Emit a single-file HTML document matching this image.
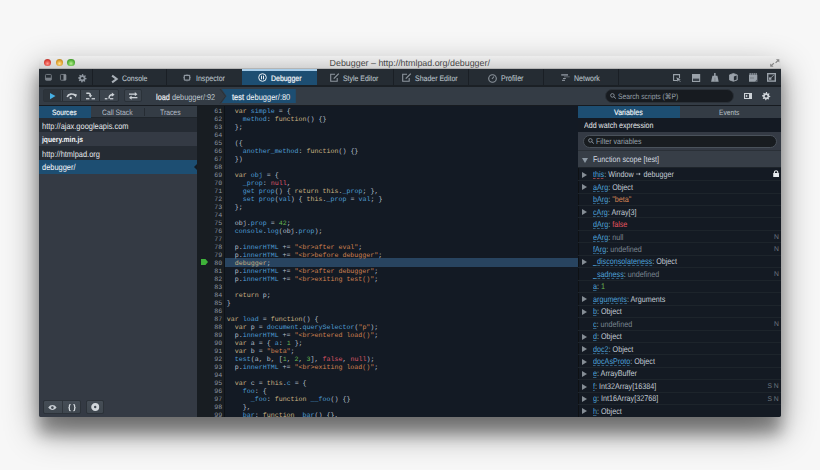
<!DOCTYPE html>
<html><head><meta charset="utf-8"><style>
*{box-sizing:border-box;margin:0;padding:0}
html,body{text-rendering:geometricPrecision;width:820px;height:470px;overflow:hidden;background:#f7f7f7;font-family:"Liberation Sans",sans-serif}
.a{position:absolute}
#win{left:38.5px;top:56px;width:742.5px;height:361.2px;background:linear-gradient(#e6e6e6 0,#e6e6e6 13px,#343a44 13px);border-radius:4px 4px 2px 2px;box-shadow:0 14px 34px rgba(0,0,0,.44),0 17px 15px rgba(0,0,0,.3);overflow:hidden}
#title{left:0;top:0;width:100%;height:13px;border-radius:4px 4px 0 0;background:linear-gradient(#ededed,#d3d3d3);border-bottom:1px solid #b4b4b4}
.tl{top:3px;width:7.4px;height:7.4px;border-radius:50%}
#ttxt{left:0;width:100%;top:1.1px;text-align:center;font-size:8.9px;line-height:12px;color:#474747}
#tb{left:0;top:13px;width:100%;height:16.2px;background:#252c33}
#tbline{left:0;top:29.2px;width:100%;height:1.8px;background:#1b2025}
.tab{top:13px;height:16.2px;color:#a9b3bd;font-size:7.05px;line-height:16.5px;white-space:nowrap}
.sep{top:13px;width:1px;height:16.2px;background:#1a1f25}
.ico{position:absolute;overflow:visible}
#dt{left:0;top:31px;width:100%;height:17.6px;background:#343c45}
#dtline{left:0;top:48.6px;width:100%;height:1.4px;background:#171b20}
.btn{top:32.9px;height:13.6px;background:#3c444d;border:1px solid #2b3239;border-radius:2px}
.pane{top:50px;height:311.2px;overflow:hidden}
.code{font-family:"Liberation Mono",monospace;font-size:6.65px;line-height:8px;padding-top:0.7px;white-space:pre;color:#b3bfca}
.ln{color:#8a94a0}
.k{color:#c9b282}.v{color:#4f9cd3}.s{color:#d08150}.n{color:#68b551}.r{color:#de5566}
.row{left:0;width:100%;height:12.45px;border-bottom:1px solid #1d242b;font-size:7.2px;line-height:12.45px;color:#c2cbd4;white-space:nowrap}
.vn{color:#4ea2db;text-decoration:underline dashed rgba(78,162,219,.55);text-decoration-thickness:1px;text-underline-offset:1.3px}
.tri{position:absolute;left:4px;top:4px;width:0;height:0;border-left:5.2px solid #858d95;border-top:3px solid transparent;border-bottom:3px solid transparent}
.st{color:#d88555}.fa{color:#e2545f}.nu{color:#7a8590}.gr{color:#68b551}
</style></head><body>
<div id="win" class="a">
<div id="title" class="a">
<div class="a tl" style="left:5.2px;background:radial-gradient(circle at 50% 65%,#ff9c92,#e2463d 50%,#a52d27 95%)"></div>
<div class="a tl" style="left:17.2px;background:radial-gradient(circle at 50% 65%,#ffe28f,#e0a232 50%,#a5771a 95%)"></div>
<div class="a tl" style="left:28.9px;background:radial-gradient(circle at 50% 65%,#b9ef95,#5cb93f 50%,#3a8526 95%)"></div>
<div id="ttxt" class="a">Debugger – http://htmlpad.org/debugger/</div>
<svg class="ico" style="left:731.5px;top:2.8px" width="9.5" height="8" viewBox="0 0 9.5 8"><path d="M9.3 0.2V3.6L5.9 0.2Z" fill="#858585"/><path d="M8 1.5L5.6 3.9" stroke="#858585" stroke-width="1.1"/><path d="M0.2 7.8V4.4L3.6 7.8Z" fill="#858585"/><path d="M1.5 6.5L3.9 4.1" stroke="#858585" stroke-width="1.1"/></svg>
</div>
<div id="tb" class="a"></div><div id="tbline" class="a"></div>
<svg class="ico" style="left:6.600000000000001px;top:18.200000000000003px" width="6.8" height="6.7" viewBox="0 0 6.8 6.7"><rect x="0.45" y="0.45" width="5.9" height="5.8" rx="0.9" fill="none" stroke="#7a8189" stroke-width="0.9"/><rect x="0.45" y="3.7" width="5.9" height="2.55" fill="#7a8189"/></svg><svg class="ico" style="left:21.4px;top:18.200000000000003px" width="6.4" height="6.7" viewBox="0 0 6.4 6.7"><rect x="0.45" y="0.45" width="5.5" height="5.8" rx="0.8" fill="none" stroke="#7a8189" stroke-width="0.9"/><rect x="3.5" y="0.45" width="2.45" height="5.8" fill="#8a9098"/></svg><svg class="ico" style="left:39.099999999999994px;top:17.5px" width="8.6" height="8.6" viewBox="0 0 8.6 8.6"><polygon points="8.60,4.30 8.52,5.14 7.16,5.48 6.87,6.02 7.34,7.34 6.69,7.88 5.48,7.16 4.90,7.34 4.30,8.60 3.46,8.52 3.12,7.16 2.58,6.87 1.26,7.34 0.72,6.69 1.44,5.48 1.26,4.90 0.00,4.30 0.08,3.46 1.44,3.12 1.73,2.58 1.26,1.26 1.91,0.72 3.12,1.44 3.70,1.26 4.30,0.00 5.14,0.08 5.48,1.44 6.02,1.73 7.34,1.26 7.88,1.91 7.16,3.12 7.34,3.70" fill="#8d959e"/><circle cx="4.3" cy="4.3" r="1.29" fill="#252c33"/></svg><div class="a sep" style="left:53.099999999999994px"></div><div class="a sep" style="left:127.9px"></div><div class="a sep" style="left:354.0px"></div><div class="a sep" style="left:429.5px"></div><div class="a sep" style="left:504.9px"></div><div class="a sep" style="left:579.5px"></div><div class="a" style="left:203.5px;top:13px;width:75.2px;height:16.2px;background:#1d4e72;border-top:2px solid #a9cde8"></div><div class="a" style="left:83.9px;top:17.60px;font-size:7.96px;line-height:10px;color:#bac2c9;white-space:nowrap;transform:scaleX(0.8696);transform-origin:0 50%;-webkit-text-stroke:0.1px #bac2c9">Console</div><div class="a" style="left:157.2px;top:17.60px;font-size:8.11px;line-height:10px;color:#bac2c9;white-space:nowrap;transform:scaleX(0.8696);transform-origin:0 50%;-webkit-text-stroke:0.1px #bac2c9">Inspector</div><div class="a" style="left:232.0px;top:17.60px;font-size:7.99px;line-height:10px;color:#f2f5f8;white-space:nowrap;transform:scaleX(0.8696);transform-origin:0 50%;-webkit-text-stroke:0.2px #f2f5f8">Debugger</div><div class="a" style="left:304.8px;top:17.60px;font-size:7.96px;line-height:10px;color:#bac2c9;white-space:nowrap;transform:scaleX(0.8696);transform-origin:0 50%;-webkit-text-stroke:0.1px #bac2c9">Style Editor</div><div class="a" style="left:376.5px;top:17.60px;font-size:8.02px;line-height:10px;color:#bac2c9;white-space:nowrap;transform:scaleX(0.8696);transform-origin:0 50%;-webkit-text-stroke:0.1px #bac2c9">Shader Editor</div><div class="a" style="left:462.1px;top:17.60px;font-size:8.16px;line-height:10px;color:#bac2c9;white-space:nowrap;transform:scaleX(0.8696);transform-origin:0 50%;-webkit-text-stroke:0.1px #bac2c9">Profiler</div><div class="a" style="left:535.3px;top:17.60px;font-size:8.12px;line-height:10px;color:#bac2c9;white-space:nowrap;transform:scaleX(0.8696);transform-origin:0 50%;-webkit-text-stroke:0.1px #bac2c9">Network</div><svg class="ico" style="left:72.0px;top:18.5px" width="7" height="8" viewBox="0 0 7 8"><path d="M1.1 0.7L5.6 4L1.1 7.3" fill="none" stroke="#a9b0b7" stroke-width="2.1"/></svg><svg class="ico" style="left:144.5px;top:18.200000000000003px" width="8" height="7.4" viewBox="0 0 8 7.4"><rect x="1.3" y="1.3" width="5.4" height="4.8" rx="0.5" fill="none" stroke="#8d959e" stroke-width="1.25"/><rect x="3.6" y="0" width="0.8" height="0.7" fill="#8d959e"/><rect x="3.6" y="6.7" width="0.8" height="0.7" fill="#8d959e"/><rect x="0" y="3.3" width="0.7" height="0.8" fill="#8d959e"/><rect x="7.3" y="3.3" width="0.7" height="0.8" fill="#8d959e"/></svg><svg class="ico" style="left:219.10000000000002px;top:17px" width="9" height="9" viewBox="0 0 9 9"><circle cx="4.5" cy="4.5" r="3.8" fill="none" stroke="#e8eef3" stroke-width="1"/><rect x="3" y="2.7" width="1" height="3.6" fill="#e8eef3"/><rect x="5" y="2.7" width="1" height="3.6" fill="#e8eef3"/></svg><svg class="ico" style="left:291.6px;top:16.900000000000006px" width="10" height="9" viewBox="0 0 10 9"><path d="M5 1.2H0.7V8.3H7.2V5" fill="none" stroke="#8d959e" stroke-width="1.1"/><path d="M3.8 5.6L8.8 0.6" stroke="#8d959e" stroke-width="1.3"/></svg><svg class="ico" style="left:363.5px;top:16.900000000000006px" width="10" height="9" viewBox="0 0 10 9"><path d="M5 1.2H0.7V8.3H7.2V5" fill="none" stroke="#8d959e" stroke-width="1.1"/><path d="M3.8 5.6L8.8 0.6" stroke="#8d959e" stroke-width="1.3"/></svg><svg class="ico" style="left:449.3px;top:17.5px" width="9" height="9" viewBox="0 0 9 9"><circle cx="4.5" cy="4.5" r="3.8" fill="none" stroke="#8d959e" stroke-width="1.1"/><path d="M4 5L6 2.5" stroke="#8d959e" stroke-width="1.1"/></svg><svg class="ico" style="left:522.5px;top:18px" width="9" height="7.2" viewBox="0 0 9 7.2"><rect x="0.2" y="0.2" width="6.8" height="1.4" fill="#8d959e"/><rect x="3" y="2.4" width="5.7" height="0.9" fill="#6a7179"/><rect x="2" y="4" width="2.8" height="1" fill="#8d959e"/><rect x="1" y="5.8" width="3" height="1.1" fill="#8d959e"/></svg><svg class="ico" style="left:634.5px;top:18px" width="8" height="8" viewBox="0 0 8 8"><path d="M4.5 6.5H0.6V0.6H6.5V4" fill="none" stroke="#9aa2aa" stroke-width="1.1"/><path d="M3.3 3.3L7.8 5.2L6 5.9L7.8 7.7L7.2 8L5.6 6.3L4.7 7.8Z" fill="#9aa2aa"/></svg><svg class="ico" style="left:653.1px;top:18px" width="8.2" height="8" viewBox="0 0 8.2 8"><rect x="0" y="0" width="8.2" height="8" fill="#9aa2aa"/><rect x="1" y="4.6" width="6.2" height="2.4" fill="#3a424a"/></svg><svg class="ico" style="left:672.5px;top:17.200000000000003px" width="7.8" height="8.8" viewBox="0 0 7.8 8.8"><rect x="3.1" y="0" width="1.5" height="3" fill="#9aa2aa"/><path d="M1.4 2.8H6.4L7.7 8.7H0.1Z" fill="#9aa2aa"/><rect x="3.6" y="4.5" width="0.7" height="4.2" fill="#6d747b"/></svg><svg class="ico" style="left:690.7px;top:17.200000000000003px" width="8.8" height="8.8" viewBox="0 0 8.8 8.8"><path d="M4.4 0.5L8.3 1.9V6.9L4.4 8.3L0.5 6.9V1.9Z" fill="#9aa2aa" stroke="#9aa2aa" stroke-width="0.8" stroke-linejoin="round"/><path d="M4.9 3.5L7.6 2.6V6.4L4.9 7.4Z" fill="#252c33"/></svg><svg class="ico" style="left:710.4px;top:17.200000000000003px" width="8.3" height="8.8" viewBox="0 0 8.3 8.8"><path d="M0 1.8V8.8H8.3V1.8Z" fill="#9aa2aa"/><rect x="0.6" y="0" width="1.1" height="2" fill="#9aa2aa"/><rect x="2.6" y="0" width="1.1" height="2" fill="#9aa2aa"/><rect x="4.6" y="0" width="1.1" height="2" fill="#9aa2aa"/><rect x="6.6" y="0" width="1.1" height="2" fill="#9aa2aa"/><rect x="1" y="4.6" width="4" height="0.8" fill="#6d747b"/><path d="M8.3 6.2L5.7 8.8H8.3Z" fill="#4d555d"/></svg><svg class="ico" style="left:728.7px;top:17.200000000000003px" width="9" height="8.8" viewBox="0 0 9 8.8"><rect x="0.7" y="0.7" width="7.6" height="7.4" fill="#2a3037" stroke="#9aa2aa" stroke-width="1.4"/><rect x="2" y="4.4" width="2.4" height="2.4" fill="#9aa2aa"/><path d="M4 4.8L6.8 2" stroke="#9aa2aa" stroke-width="0.9"/></svg><div id="dt" class="a"></div><div id="dtline" class="a"></div>
<div class="a btn" style="left:4.399999999999999px;width:76.19999999999999px"></div><div class="a" style="left:5.399999999999999px;top:33.9px;width:17.6px;height:11.6px;background:#2d343b"></div><div class="a" style="left:23.0px;top:33.9px;width:1px;height:11.6px;background:#262c33"></div><div class="a" style="left:41.8px;top:33.9px;width:1px;height:11.6px;background:#262c33"></div><div class="a" style="left:60.8px;top:33.9px;width:1px;height:11.6px;background:#262c33"></div><div class="a btn" style="left:85.4px;width:18.0px"></div><svg class="ico" style="left:11.399999999999999px;top:37px" width="5.5" height="6.2" viewBox="0 0 5.5 6.2"><path d="M0 0L5.5 3.1L0 6.2Z" fill="#46afe3"/></svg><svg class="ico" style="left:23.5px;top:32px" width="60" height="16" viewBox="62 88 60 16"><path d="M67.2 97C68.3 93.6 73 93.2 75 95.6" fill="none" stroke="#cdd2d7" stroke-width="1.6"/><path d="M73.3 93.4L77 94.6L75.7 97.6Z" fill="#cdd2d7"/><circle cx="70.7" cy="98" r="1.15" fill="#cdd2d7"/><path d="M86.3 93.2H88.8C90.2 93.2 90.4 94.6 90.4 95.8" fill="none" stroke="#cdd2d7" stroke-width="1.5"/><path d="M88.6 95.3H92.3L90.45 97.6Z" fill="#cdd2d7"/><rect x="86" y="98.1" width="3.4" height="1.3" fill="#cdd2d7"/><rect x="91.6" y="98.1" width="3.4" height="1.3" fill="#cdd2d7"/><rect x="104.8" y="98.1" width="2.6" height="1.3" fill="#cdd2d7"/><rect x="110" y="98.1" width="3.3" height="1.3" fill="#cdd2d7"/><path d="M109.2 98.6C108.8 96 110 94.7 112.2 94.7" fill="none" stroke="#cdd2d7" stroke-width="1.5"/><path d="M111.8 92.6L114.6 94.7L111.8 96.8Z" fill="#cdd2d7"/></svg><svg class="ico" style="left:90.19999999999999px;top:36.2px" width="8.4" height="7.8" viewBox="0 0 8.4 7.8"><rect x="0" y="1.5" width="6.5" height="1.3" fill="#cdd2d7"/><path d="M5.8 0L8.4 2.15L5.8 4.3Z" fill="#cdd2d7"/><rect x="1.9" y="5" width="6.5" height="1.3" fill="#cdd2d7"/><path d="M2.6 3.5L0 5.65L2.6 7.8Z" fill="#cdd2d7"/></svg><div class="a" style="left:183.0px;top:32.8px;width:74.30000000000001px;height:14.5px;background:#1d4e72;clip-path:polygon(0 0,100% 0,100% 100%,0 100%,5px 50%)"></div><svg class="ico" style="left:180.5px;top:32.8px" width="8" height="14.5" viewBox="0 0 8 14.5"><path d="M1 0L6.5 7.25L1 14.5" fill="none" stroke="#2a3138" stroke-width="1"/></svg><div class="a" style="left:117.30000000000001px;top:35.50px;font-size:8.45px;line-height:10px;color:#bcc4cc;white-space:nowrap;transform:scaleX(0.8696);transform-origin:0 50%;"><span style="-webkit-text-stroke:0.2px #e6eaee;color:#e6eaee">load</span> debugger/:92</div><div class="a" style="left:193.7px;top:35.50px;font-size:8.62px;line-height:10px;color:#f2f5f8;white-space:nowrap;transform:scaleX(0.8696);transform-origin:0 50%;"><span style="-webkit-text-stroke:0.2px #f2f5f8">test</span> debugger/:80</div><div class="a" style="left:566.3px;top:33.2px;width:129.60000000000002px;height:13.4px;border-radius:7px;background:#171b20;border:1px solid #2b3138"></div><svg class="ico" style="left:571.3px;top:37.2px" width="6.2" height="5.8" viewBox="0 0 6.2 5.8"><circle cx="2.4" cy="2.4" r="1.8" fill="none" stroke="#8a939c" stroke-width="0.9"/><path d="M3.7 3.6L5.9 5.6" stroke="#8a939c" stroke-width="1"/></svg><div class="a" style="left:579.5px;top:35.70px;font-size:7.74px;line-height:10px;color:#98a1aa;white-space:nowrap;transform:scaleX(0.8696);transform-origin:0 50%;">Search scripts (⌘P)</div><svg class="ico" style="left:705.5px;top:37.2px" width="8" height="6" viewBox="0 0 8 6"><rect x="0.5" y="0.5" width="7" height="5" fill="none" stroke="#cdd2d7" stroke-width="1"/><rect x="5" y="0.5" width="2.5" height="5" fill="#cdd2d7"/><path d="M1.8 1.6L3.9 3L1.8 4.4Z" fill="#cdd2d7"/></svg><svg class="ico" style="left:723.2px;top:36.3px" width="8.3" height="8.3" viewBox="0 0 8.3 8.3"><polygon points="8.30,4.15 8.22,4.96 6.91,5.29 6.63,5.81 7.08,7.08 6.46,7.60 5.29,6.91 4.73,7.08 4.15,8.30 3.34,8.22 3.01,6.91 2.49,6.63 1.22,7.08 0.70,6.46 1.39,5.29 1.22,4.73 0.00,4.15 0.08,3.34 1.39,3.01 1.67,2.49 1.22,1.22 1.84,0.70 3.01,1.39 3.57,1.22 4.15,0.00 4.96,0.08 5.29,1.39 5.81,1.67 7.08,1.22 7.60,1.84 6.91,3.01 7.08,3.57" fill="#cdd2d7"/><circle cx="4.15" cy="4.15" r="1.25" fill="#343c45"/></svg><div class="a pane" style="left:0;width:158.5px;background:#343a44"><div class="a" style="left:0;top:0;width:100%;height:12px;background:#343c45;border-bottom:1px solid #1f252b"></div><div class="a" style="left:0;top:0;width:52.2px;height:12px;background:#1d4e72"></div><div class="a" style="left:105.9px;top:2px;width:1px;height:8px;background:#262c33"></div><div class="a" style="left:13.0px;top:1.50px;font-size:7.70px;line-height:10px;color:#f0f4f7;white-space:nowrap;transform:scaleX(0.8696);transform-origin:0 50%;-webkit-text-stroke:0.15px #f0f4f7">Sources</div><div class="a" style="left:63.2px;top:1.50px;font-size:7.82px;line-height:10px;color:#b5bdc5;white-space:nowrap;transform:scaleX(0.8696);transform-origin:0 50%;">Call Stack</div><div class="a" style="left:121.5px;top:1.50px;font-size:7.84px;line-height:10px;color:#b5bdc5;white-space:nowrap;transform:scaleX(0.8696);transform-origin:0 50%;">Traces</div><div class="a" style="left:0;top:12.0px;width:100%;height:13.9px;background:#252b33"></div><div class="a" style="left:3.1000000000000014px;top:14.70px;font-size:8.57px;line-height:10px;color:#e4e8ec;white-space:nowrap;transform:scaleX(0.8696);transform-origin:0 50%;font-weight:normal">http://ajax.googleapis.com</div><div class="a" style="left:0;top:25.9px;width:100%;height:13.9px;background:#343a44"></div><div class="a" style="left:3.1000000000000014px;top:28.60px;font-size:7.76px;line-height:10px;color:#f2f4f6;white-space:nowrap;transform:scaleX(0.8696);transform-origin:0 50%;font-weight:bold">jquery.min.js</div><div class="a" style="left:0;top:39.8px;width:100%;height:13.9px;background:#252b33"></div><div class="a" style="left:3.1000000000000014px;top:42.50px;font-size:8.57px;line-height:10px;color:#e4e8ec;white-space:nowrap;transform:scaleX(0.8696);transform-origin:0 50%;font-weight:normal">http://htmlpad.org</div><div class="a" style="left:0;top:53.7px;width:100%;height:13.9px;background:#1d4e72"></div><div class="a" style="left:3.1000000000000014px;top:56.40px;font-size:8.57px;line-height:10px;color:#f5f7fa;white-space:nowrap;transform:scaleX(0.8696);transform-origin:0 50%;font-weight:normal">debugger/</div><div class="a" style="left:155.7px;top:57.7px;width:0;height:0;border-right:3px solid #131a22;border-top:3px solid transparent;border-bottom:3px solid transparent"></div><div class="a" style="left:4.600000000000001px;top:293.7px;width:37.9px;height:14px;background:linear-gradient(#454d56,#3f474f);border:1px solid #2c3239;border-radius:2px"></div><div class="a" style="left:47.5px;top:293.7px;width:17.5px;height:14px;background:linear-gradient(#454d56,#3f474f);border:1px solid #2c3239;border-radius:2px"></div><div class="a" style="left:23.1px;top:294.7px;width:1px;height:12px;background:#30363d"></div><svg class="ico" style="left:9.299999999999997px;top:298.6px" width="8.8" height="5.2" viewBox="0 0 8.8 5.2"><path d="M0.2 2.6C2.5 -0.7 6.3 -0.7 8.6 2.6C6.3 5.9 2.5 5.9 0.2 2.6Z" fill="#c8ced4"/><circle cx="4.4" cy="2.6" r="1.3" fill="#3e464f"/></svg><svg class="ico" style="left:29.299999999999997px;top:297.6px" width="8" height="7.2" viewBox="0 0 8 7.2"><path d="M2.6 0.6H2C1.4 0.6 1.4 1.1 1.4 1.7V2.7C1.4 3.3 1 3.6 0.4 3.6C1 3.6 1.4 3.9 1.4 4.5V5.5C1.4 6.1 1.4 6.6 2 6.6H2.6M5.4 0.6H6C6.6 0.6 6.6 1.1 6.6 1.7V2.7C6.6 3.3 7 3.6 7.6 3.6C7 3.6 6.6 3.9 6.6 4.5V5.5C6.6 6.1 6.6 6.6 6 6.6H5.4" fill="none" stroke="#d2d7dc" stroke-width="1.25" stroke-linejoin="miter"/></svg><svg class="ico" style="left:52.2px;top:297.2px" width="8.4" height="8" viewBox="0 0 8.4 8"><circle cx="4.2" cy="4" r="2.6" fill="none" stroke="#d2d7dc" stroke-width="2.8"/></svg></div>
<div class="a pane" style="left:158.5px;width:381.20000000000005px;background:#131a24"><div class="a" style="left:0;top:0;width:28px;height:100%;background:#181d22;border-right:1px solid #0e1216"></div><div class="a" style="left:28px;top:151.89999999999998px;width:400px;height:8.9px;background:#284460"></div><svg class="ico" style="left:4px;top:152.8px" width="7" height="6" viewBox="0 0 7 6"><path d="M0 0H4.5L7 3L4.5 6H0Z" fill="#3fb23a"/></svg><div class="a code ln" style="left:0;top:0px;width:25.30000000000001px;text-align:right">61</div><div class="a code" style="left:29.80000000000001px;top:0px">  <span class="k">var</span> <span class="v">simple</span> = {</div><div class="a code ln" style="left:0;top:8px;width:25.30000000000001px;text-align:right">62</div><div class="a code" style="left:29.80000000000001px;top:8px">    <span class="v">method</span>: <span class="k">function</span>() {}</div><div class="a code ln" style="left:0;top:16px;width:25.30000000000001px;text-align:right">63</div><div class="a code" style="left:29.80000000000001px;top:16px">  };</div><div class="a code ln" style="left:0;top:24px;width:25.30000000000001px;text-align:right">64</div><div class="a code" style="left:29.80000000000001px;top:24px"></div><div class="a code ln" style="left:0;top:32px;width:25.30000000000001px;text-align:right">65</div><div class="a code" style="left:29.80000000000001px;top:32px">  ({</div><div class="a code ln" style="left:0;top:40px;width:25.30000000000001px;text-align:right">66</div><div class="a code" style="left:29.80000000000001px;top:40px">    <span class="v">another_method</span>: <span class="k">function</span>() {}</div><div class="a code ln" style="left:0;top:48px;width:25.30000000000001px;text-align:right">67</div><div class="a code" style="left:29.80000000000001px;top:48px">  })</div><div class="a code ln" style="left:0;top:56px;width:25.30000000000001px;text-align:right">68</div><div class="a code" style="left:29.80000000000001px;top:56px"></div><div class="a code ln" style="left:0;top:64px;width:25.30000000000001px;text-align:right">69</div><div class="a code" style="left:29.80000000000001px;top:64px">  <span class="k">var</span> <span class="v">obj</span> = {</div><div class="a code ln" style="left:0;top:72px;width:25.30000000000001px;text-align:right">70</div><div class="a code" style="left:29.80000000000001px;top:72px">    <span class="v">_prop</span>: <span class="r">null</span>,</div><div class="a code ln" style="left:0;top:80px;width:25.30000000000001px;text-align:right">71</div><div class="a code" style="left:29.80000000000001px;top:80px">    <span class="v">get</span> <span class="v">prop</span>() { <span class="k">return</span> <span class="k">this</span>.<span class="v">_prop</span>; },</div><div class="a code ln" style="left:0;top:88px;width:25.30000000000001px;text-align:right">72</div><div class="a code" style="left:29.80000000000001px;top:88px">    <span class="v">set</span> <span class="v">prop</span>(<span class="v">val</span>) { <span class="k">this</span>.<span class="v">_prop</span> = <span class="v">val</span>; }</div><div class="a code ln" style="left:0;top:96px;width:25.30000000000001px;text-align:right">73</div><div class="a code" style="left:29.80000000000001px;top:96px">  };</div><div class="a code ln" style="left:0;top:104px;width:25.30000000000001px;text-align:right">74</div><div class="a code" style="left:29.80000000000001px;top:104px"></div><div class="a code ln" style="left:0;top:112px;width:25.30000000000001px;text-align:right">75</div><div class="a code" style="left:29.80000000000001px;top:112px">  obj.<span class="v">prop</span> = <span class="n">42</span>;</div><div class="a code ln" style="left:0;top:120px;width:25.30000000000001px;text-align:right">76</div><div class="a code" style="left:29.80000000000001px;top:120px">  <span class="v">console</span>.<span class="v">log</span>(obj.<span class="v">prop</span>);</div><div class="a code ln" style="left:0;top:128px;width:25.30000000000001px;text-align:right">77</div><div class="a code" style="left:29.80000000000001px;top:128px"></div><div class="a code ln" style="left:0;top:136px;width:25.30000000000001px;text-align:right">78</div><div class="a code" style="left:29.80000000000001px;top:136px">  p.<span class="v">innerHTML</span> += <span class="s">&quot;&lt;br&gt;after eval&quot;</span>;</div><div class="a code ln" style="left:0;top:144px;width:25.30000000000001px;text-align:right">79</div><div class="a code" style="left:29.80000000000001px;top:144px">  p.<span class="v">innerHTML</span> += <span class="s">&quot;&lt;br&gt;before debugger&quot;</span>;</div><div class="a code ln" style="left:0;top:152px;width:25.30000000000001px;text-align:right">80</div><div class="a code" style="left:29.80000000000001px;top:152px">  <span class="k">debugger</span>;</div><div class="a code ln" style="left:0;top:160px;width:25.30000000000001px;text-align:right">81</div><div class="a code" style="left:29.80000000000001px;top:160px">  p.<span class="v">innerHTML</span> += <span class="s">&quot;&lt;br&gt;after debugger&quot;</span>;</div><div class="a code ln" style="left:0;top:168px;width:25.30000000000001px;text-align:right">82</div><div class="a code" style="left:29.80000000000001px;top:168px">  p.<span class="v">innerHTML</span> += <span class="s">&quot;&lt;br&gt;exiting test()&quot;</span>;</div><div class="a code ln" style="left:0;top:176px;width:25.30000000000001px;text-align:right">83</div><div class="a code" style="left:29.80000000000001px;top:176px"></div><div class="a code ln" style="left:0;top:184px;width:25.30000000000001px;text-align:right">84</div><div class="a code" style="left:29.80000000000001px;top:184px">  <span class="k">return</span> p;</div><div class="a code ln" style="left:0;top:192px;width:25.30000000000001px;text-align:right">85</div><div class="a code" style="left:29.80000000000001px;top:192px">}</div><div class="a code ln" style="left:0;top:200px;width:25.30000000000001px;text-align:right">86</div><div class="a code" style="left:29.80000000000001px;top:200px"></div><div class="a code ln" style="left:0;top:208px;width:25.30000000000001px;text-align:right">87</div><div class="a code" style="left:29.80000000000001px;top:208px"><span class="k">var</span> <span class="v">load</span> = <span class="k">function</span>() {</div><div class="a code ln" style="left:0;top:216px;width:25.30000000000001px;text-align:right">88</div><div class="a code" style="left:29.80000000000001px;top:216px">  <span class="k">var</span> p = <span class="v">document</span>.<span class="v">querySelector</span>(<span class="s">&quot;p&quot;</span>);</div><div class="a code ln" style="left:0;top:224px;width:25.30000000000001px;text-align:right">89</div><div class="a code" style="left:29.80000000000001px;top:224px">  p.<span class="v">innerHTML</span> += <span class="s">&quot;&lt;br&gt;entered load()&quot;</span>;</div><div class="a code ln" style="left:0;top:232px;width:25.30000000000001px;text-align:right">90</div><div class="a code" style="left:29.80000000000001px;top:232px">  <span class="k">var</span> a = { <span class="v">a</span>: <span class="n">1</span> };</div><div class="a code ln" style="left:0;top:240px;width:25.30000000000001px;text-align:right">91</div><div class="a code" style="left:29.80000000000001px;top:240px">  <span class="k">var</span> b = <span class="s">&quot;beta&quot;</span>;</div><div class="a code ln" style="left:0;top:248px;width:25.30000000000001px;text-align:right">92</div><div class="a code" style="left:29.80000000000001px;top:248px">  <span class="v">test</span>(a, b, [<span class="n">1</span>, <span class="n">2</span>, <span class="n">3</span>], <span class="r">false</span>, <span class="r">null</span>);</div><div class="a code ln" style="left:0;top:256px;width:25.30000000000001px;text-align:right">93</div><div class="a code" style="left:29.80000000000001px;top:256px">  p.<span class="v">innerHTML</span> += <span class="s">&quot;&lt;br&gt;exiting load()&quot;</span>;</div><div class="a code ln" style="left:0;top:264px;width:25.30000000000001px;text-align:right">94</div><div class="a code" style="left:29.80000000000001px;top:264px"></div><div class="a code ln" style="left:0;top:272px;width:25.30000000000001px;text-align:right">95</div><div class="a code" style="left:29.80000000000001px;top:272px">  <span class="k">var</span> c = <span class="k">this</span>.<span class="v">c</span> = {</div><div class="a code ln" style="left:0;top:280px;width:25.30000000000001px;text-align:right">96</div><div class="a code" style="left:29.80000000000001px;top:280px">    <span class="v">foo</span>: {</div><div class="a code ln" style="left:0;top:288px;width:25.30000000000001px;text-align:right">97</div><div class="a code" style="left:29.80000000000001px;top:288px">      <span class="v">_foo</span>: <span class="k">function</span> <span class="v">__foo</span>() {}</div><div class="a code ln" style="left:0;top:296px;width:25.30000000000001px;text-align:right">98</div><div class="a code" style="left:29.80000000000001px;top:296px">    },</div><div class="a code ln" style="left:0;top:304px;width:25.30000000000001px;text-align:right">99</div><div class="a code" style="left:29.80000000000001px;top:304px">    <span class="v">bar</span>: <span class="k">function</span> <span class="v">_bar</span>() {},</div></div>
<div class="a pane" style="left:539.7px;width:202.79999999999995px;background:#141a23"><div class="a" style="left:0;top:0;width:1px;height:100%;background:#0e1114"></div><div class="a" style="left:0;top:0;width:100%;height:12.2px;background:#343c45"></div><div class="a" style="left:0;top:0;width:101.79999999999995px;height:12.2px;background:#1d4e72"></div><div class="a" style="left:35.5px;top:1.50px;font-size:8.05px;line-height:10px;color:#f0f4f7;white-space:nowrap;transform:scaleX(0.8696);transform-origin:0 50%;-webkit-text-stroke:0.15px #f0f4f7">Variables</div><div class="a" style="left:141.29999999999995px;top:1.50px;font-size:7.65px;line-height:10px;color:#b8c0c8;white-space:nowrap;transform:scaleX(0.8696);transform-origin:0 50%;">Events</div><div class="a" style="left:0;top:12.2px;width:100%;height:14px;background:#141a23"></div><div class="a" style="left:5.7999999999999545px;top:14.60px;font-size:8.16px;line-height:10px;color:#e4e8ec;white-space:nowrap;transform:scaleX(0.8696);transform-origin:0 50%;">Add watch expression</div><div class="a" style="left:0;top:26.2px;width:100%;height:19px;background:#343a44"></div><div class="a" style="left:4.7999999999999545px;top:28.900000000000006px;width:194px;height:12.9px;border-radius:6.5px;background:#181c20;border:1px solid #4a525b"></div><svg class="ico" style="left:9.599999999999909px;top:31.599999999999994px" width="6.2" height="5.8" viewBox="0 0 6.2 5.8"><circle cx="2.4" cy="2.4" r="1.8" fill="none" stroke="#8a939c" stroke-width="0.9"/><path d="M3.7 3.6L5.9 5.6" stroke="#8a939c" stroke-width="1"/></svg><div class="a" style="left:17.799999999999955px;top:30.60px;font-size:8.05px;line-height:10px;color:#9aa3ac;white-space:nowrap;transform:scaleX(0.8696);transform-origin:0 50%;">Filter variables</div><div class="a" style="left:0;top:44.400000000000006px;width:100%;height:18.0px;background:#373e47;border-top:1px solid #2a3037;border-bottom:1px solid #1e242a"></div><div class="a" style="left:3.7999999999999545px;top:51.5px;width:0;height:0;border-top:5px solid #8c98a3;border-left:3px solid transparent;border-right:3px solid transparent"></div><div class="a" style="left:15.099999999999909px;top:49.20px;font-size:8.22px;line-height:10px;color:#d4dae0;white-space:nowrap;transform:scaleX(0.8696);transform-origin:0 50%;">Function scope [test]</div><div class="a row" style="top:62.70px"><div class="tri" style="left:3.599999999999909px;top:3.2px"></div><span class="a" style="left:15.0px;top:0.6px;font-size:8.28px;transform:scaleX(0.8696);transform-origin:0 50%"><span class="vn" style="text-decoration-color:rgba(210,90,90,.7)">this</span>: <span>Window <svg width="6" height="4" viewBox="0 0 6 4" style="vertical-align:0.8px;margin:0 0.3px"><path d="M0.2 2H4.5" stroke="#aab4be" stroke-width="0.8"/><path d="M3.8 0.5L5.9 2L3.8 3.5Z" fill="#aab4be"/></svg> debugger</span></span><svg class="ico" style="left:194.89999999999998px;top:1.1px" width="6.2" height="7.2" viewBox="0 0 6.2 7.2"><path d="M1.4 3.4V2.3C1.4 0.2 4.8 0.2 4.8 2.3V3.4" fill="none" stroke="#e6eaee" stroke-width="1.1"/><rect x="0.2" y="3" width="5.8" height="4.1" rx="0.4" fill="#e6eaee"/></svg></div><div class="a row" style="top:75.15px"><div class="tri" style="left:3.599999999999909px;top:3.2px"></div><span class="a" style="left:15.0px;top:0.6px;font-size:8.28px;transform:scaleX(0.8696);transform-origin:0 50%"><span class="vn">aArg</span>: <span>Object</span></span></div><div class="a row" style="top:87.60px"><span class="a" style="left:15.0px;top:0.6px;font-size:8.28px;transform:scaleX(0.8696);transform-origin:0 50%"><span class="vn">bArg</span>: <span class="st">&quot;beta&quot;</span></span></div><div class="a row" style="top:100.05px"><div class="tri" style="left:3.599999999999909px;top:3.2px"></div><span class="a" style="left:15.0px;top:0.6px;font-size:8.28px;transform:scaleX(0.8696);transform-origin:0 50%"><span class="vn">cArg</span>: <span>Array[3]</span></span></div><div class="a row" style="top:112.50px"><span class="a" style="left:15.0px;top:0.6px;font-size:8.28px;transform:scaleX(0.8696);transform-origin:0 50%"><span class="vn">dArg</span>: <span class="fa">false</span></span></div><div class="a row" style="top:124.95px"><span class="a" style="left:15.0px;top:0.6px;font-size:8.28px;transform:scaleX(0.8696);transform-origin:0 50%"><span class="vn">eArg</span>: <span class="nu">null</span></span><span class="a" style="right:2.2000000000000455px;top:1px;color:#6a747e;font-size:6.8px">N</span></div><div class="a row" style="top:137.40px"><span class="a" style="left:15.0px;top:0.6px;font-size:8.28px;transform:scaleX(0.8696);transform-origin:0 50%"><span class="vn">fArg</span>: <span class="nu">undefined</span></span><span class="a" style="right:2.2000000000000455px;top:1px;color:#6a747e;font-size:6.8px">N</span></div><div class="a row" style="top:149.85px"><div class="tri" style="left:3.599999999999909px;top:3.2px"></div><span class="a" style="left:15.0px;top:0.6px;font-size:8.28px;transform:scaleX(0.8696);transform-origin:0 50%"><span class="vn">_disconsolateness</span>: <span>Object</span></span></div><div class="a row" style="top:162.30px"><span class="a" style="left:15.0px;top:0.6px;font-size:8.28px;transform:scaleX(0.8696);transform-origin:0 50%"><span class="vn">_sadness</span>: <span class="nu">undefined</span></span><span class="a" style="right:2.2000000000000455px;top:1px;color:#6a747e;font-size:6.8px">N</span></div><div class="a row" style="top:174.75px"><span class="a" style="left:15.0px;top:0.6px;font-size:8.28px;transform:scaleX(0.8696);transform-origin:0 50%"><span class="vn">a</span>: <span class="gr">1</span></span></div><div class="a row" style="top:187.20px"><div class="tri" style="left:3.599999999999909px;top:3.2px"></div><span class="a" style="left:15.0px;top:0.6px;font-size:8.28px;transform:scaleX(0.8696);transform-origin:0 50%"><span class="vn">arguments</span>: <span>Arguments</span></span></div><div class="a row" style="top:199.65px"><div class="tri" style="left:3.599999999999909px;top:3.2px"></div><span class="a" style="left:15.0px;top:0.6px;font-size:8.28px;transform:scaleX(0.8696);transform-origin:0 50%"><span class="vn">b</span>: <span>Object</span></span></div><div class="a row" style="top:212.10px"><span class="a" style="left:15.0px;top:0.6px;font-size:8.28px;transform:scaleX(0.8696);transform-origin:0 50%"><span class="vn">c</span>: <span class="nu">undefined</span></span><span class="a" style="right:2.2000000000000455px;top:1px;color:#6a747e;font-size:6.8px">N</span></div><div class="a row" style="top:224.55px"><div class="tri" style="left:3.599999999999909px;top:3.2px"></div><span class="a" style="left:15.0px;top:0.6px;font-size:8.28px;transform:scaleX(0.8696);transform-origin:0 50%"><span class="vn">d</span>: <span>Object</span></span></div><div class="a row" style="top:237.00px"><div class="tri" style="left:3.599999999999909px;top:3.2px"></div><span class="a" style="left:15.0px;top:0.6px;font-size:8.28px;transform:scaleX(0.8696);transform-origin:0 50%"><span class="vn">doc2</span>: <span>Object</span></span></div><div class="a row" style="top:249.45px"><div class="tri" style="left:3.599999999999909px;top:3.2px"></div><span class="a" style="left:15.0px;top:0.6px;font-size:8.28px;transform:scaleX(0.8696);transform-origin:0 50%"><span class="vn">docAsProto</span>: <span>Object</span></span></div><div class="a row" style="top:261.90px"><div class="tri" style="left:3.599999999999909px;top:3.2px"></div><span class="a" style="left:15.0px;top:0.6px;font-size:8.28px;transform:scaleX(0.8696);transform-origin:0 50%"><span class="vn">e</span>: <span>ArrayBuffer</span></span></div><div class="a row" style="top:274.35px"><div class="tri" style="left:3.599999999999909px;top:3.2px"></div><span class="a" style="left:15.0px;top:0.6px;font-size:8.28px;transform:scaleX(0.8696);transform-origin:0 50%"><span class="vn">f</span>: <span>Int32Array[16384]</span></span><span class="a" style="right:2.2000000000000455px;top:1px;color:#6a747e;font-size:6.8px">S N</span></div><div class="a row" style="top:286.80px"><div class="tri" style="left:3.599999999999909px;top:3.2px"></div><span class="a" style="left:15.0px;top:0.6px;font-size:8.28px;transform:scaleX(0.8696);transform-origin:0 50%"><span class="vn">g</span>: <span>Int16Array[32768]</span></span><span class="a" style="right:2.2000000000000455px;top:1px;color:#6a747e;font-size:6.8px">S N</span></div><div class="a row" style="top:299.25px"><div class="tri" style="left:3.599999999999909px;top:3.2px"></div><span class="a" style="left:15.0px;top:0.6px;font-size:8.28px;transform:scaleX(0.8696);transform-origin:0 50%"><span class="vn">h</span>: <span>Object</span></span></div></div>
</div>
</body></html>
